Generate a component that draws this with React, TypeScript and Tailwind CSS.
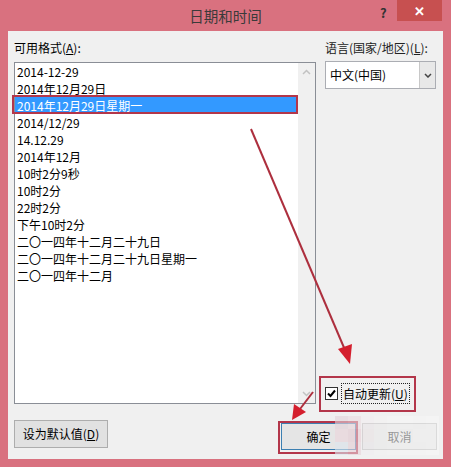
import React from "react";

const formats = [
  "2014-12-29",
  "2014年12月29日",
  "2014年12月29日星期一",
  "2014/12/29",
  "14.12.29",
  "2014年12月",
  "10时2分9秒",
  "10时2分",
  "22时2分",
  "下午10时2分",
  "二〇一四年十二月二十九日",
  "二〇一四年十二月二十九日星期一",
  "二〇一四年十二月",
];

const mosaic = [
  ["#e4d3da", "#ecdbe0", "#f3eef0", "#f4f2f3", "#f6f5f5", "#f7f7f7", "#f6f6f6", "#f8f8f8"],
  ["#ecd6dc", "#e8cdd5", "#f2ecee", "#f3f3f3", "#f5f5f5", "#f4f4f4", "#f7f7f7", "#f8f8f8"],
  ["#dde5ee", "#e9d3da", "#f1eef0", "#f2f2f2", "#f4f4f4", "#f5f5f5", "#f6f6f6", "#f7f7f7"],
];

function Arrows() {
  return (
    <svg className="absolute inset-0 pointer-events-none" width={451} height={467} viewBox="0 0 451 467">
      <line x1={251} y1={129} x2={345} y2={350} stroke="#ad2f3e" strokeWidth={2} />
      <polygon points="350,364 338,349 352,344" fill="#d41f2e" />
      <line x1={313} y1={392} x2={300} y2={409} stroke="#ad2f3e" strokeWidth={2} />
      <polygon points="292,420 294,404 306,412" fill="#d41f2e" />
    </svg>
  );
}

export default function App() {
  return (
    <div
      className="relative w-[451px] h-[467px] bg-[#d9717f] overflow-hidden"
      style={{ fontFamily: '"Noto Sans CJK SC", "Noto Sans", sans-serif' }}
    >
      {/* title bar */}
      <div className="flex h-[31px] items-start">
        <div className="w-[76px]" />
        <div className="flex-1 text-center text-[14.5px] leading-[31px] text-[#3a3a3a]">日期和时间</div>
        <div className="flex w-[76px] items-start">
          <span className="w-[22px] pl-[5px] pt-[3px] text-[13px] font-bold text-[#333]">?</span>
          <div className="flex h-[21px] w-[45px] items-center justify-center bg-[#c75050] text-[13px] font-bold text-white">
            ✕
          </div>
        </div>
      </div>

      {/* client area */}
      <div className="mx-[8px] flex h-[428px] w-[435px] flex-col bg-[#f0f0f0] px-[6px] text-[12px] text-black">
        <div className="flex gap-[9px]">
          {/* left column */}
          <div className="flex w-[302px] flex-col">
            <div className="mt-[9px] h-[22px] leading-[16px]">
              可用格式(<span className="underline">A</span>):
            </div>
            <div className="flex h-[342px] border border-[#8a8e96] bg-white">
              <div className="flex-1">
                {formats.map((f, i) => (
                  <div
                    key={f}
                    className={
                      "h-[17px] pl-[2px] leading-[17px] " +
                      (i === 2 ? "bg-[#3399ff] text-white" : "")
                    }
                  >
                    {f}
                  </div>
                ))}
              </div>
              <div className="flex w-[17px] flex-col items-center justify-between bg-[#f0f0f0] py-[6px]">
                <svg width="9" height="6" viewBox="0 0 9 6">
                  <path d="M1 5 L4.5 1.5 L8 5" fill="none" stroke="#c2c2c2" strokeWidth="1.5" />
                </svg>
                <svg width="9" height="6" viewBox="0 0 9 6">
                  <path d="M1 1 L4.5 4.5 L8 1" fill="none" stroke="#c2c2c2" strokeWidth="1.5" />
                </svg>
              </div>
            </div>
          </div>

          {/* right column */}
          <div className="flex flex-1 flex-col">
            <div className="mt-[9px] h-[21px] leading-[16px] text-[#222]">
              语言(国家/地区)(<span className="underline">L</span>):
            </div>
            <div className="flex h-[28px] w-[111px] border border-[#abadb3] bg-white">
              <div className="flex-1 pl-[4px] leading-[26px]">中文(中国)</div>
              <div className="flex w-[16px] items-center justify-center border-l border-[#c8c8c8] bg-[#e8e8e8]">
                <svg width="8" height="5" viewBox="0 0 8 5">
                  <path d="M1 1 L4 4 L7 1" fill="none" stroke="#444" strokeWidth="1.5" />
                </svg>
              </div>
            </div>
            <div className="mt-[294px] flex items-center gap-[3px]">
              <div className="flex h-[13px] w-[13px] items-center justify-center border border-[#333] bg-white">
                <svg width="9" height="9" viewBox="0 0 9 9">
                  <path d="M1 4.5 L3.5 7 L8 1.5" fill="none" stroke="#000" strokeWidth="2" />
                </svg>
              </div>
              <div className="border border-dotted border-[#222] px-[1px] leading-[19px]">
                自动更新(<span className="underline">U</span>)
              </div>
            </div>
          </div>
        </div>

        {/* bottom buttons */}
        <div className="mt-[16px] flex items-start">
          <div className="flex h-[28px] w-[94px] items-center justify-center border border-[#adadad] bg-[#e1e1e1]">
            设为默认值(<span className="underline">D</span>)
          </div>
          <div className="flex-1" />
          <div className="mt-[3px] flex h-[27px] w-[75px] items-center justify-center border border-[#3c7fb1] bg-[#e5e5e5]">
            确定
          </div>
          <div className="ml-[6px] mt-[3px] flex h-[27px] w-[75px] items-center justify-center border border-[#adadad] bg-[#e1e1e1]">
            取消
          </div>
        </div>
      </div>

      {/* annotations */}
      <div className="absolute left-[12px] top-[95px] h-[19px] w-[286px] border-2 border-[#b3364a]" />
      <div className="absolute left-[319px] top-[376px] h-[36px] w-[97px] border-2 border-[#b3364a]" />
      <div className="absolute left-[278px] top-[421px] h-[33px] w-[80px] border-2 border-[#b3364a]" />
      <div className="absolute left-[335px] top-[416px] grid grid-cols-8 opacity-60">
        {mosaic.flat().map((c, i) => (
          <div key={i} className="h-[13px] w-[13px]" style={{ backgroundColor: c }} />
        ))}
      </div>
      <Arrows />
    </div>
  );
}
